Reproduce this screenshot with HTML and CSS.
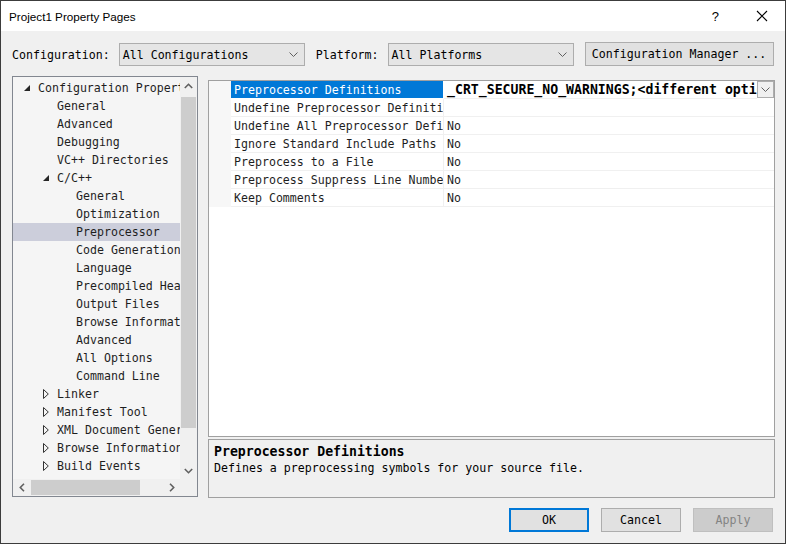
FILE: index.html
```html
<!DOCTYPE html>
<html>
<head>
<meta charset="utf-8">
<link rel="stylesheet" href="styles.css">
</head>
<body>
<div class="window">
  <div class="titlebar">
    <span class="title">Project1 Property Pages</span>
    <span class="help">?</span>
    <span class="close"><svg width="12" height="12" viewBox="0 0 12 12"><path d="M1 1L11 11M11 1L1 11" stroke="#000" stroke-width="1.1" fill="none"/></svg></span>
  </div>

  <div class="config-row">
    <span class="label">Configuration:</span>
    <div class="select sel-config"><span>All Configurations</span><svg class="chev" width="9" height="5" viewBox="0 0 9 5"><path d="M0.5 0.5L4.5 4.5L8.5 0.5" stroke="#606060" fill="none"/></svg></div>
    <span class="label lbl-platform">Platform:</span>
    <div class="select sel-platform"><span>All Platforms</span><svg class="chev" width="9" height="5" viewBox="0 0 9 5"><path d="M0.5 0.5L4.5 4.5L8.5 0.5" stroke="#606060" fill="none"/></svg></div>
    <div class="btn btn-cm">Configuration Manager ...</div>
  </div>

  <div class="content">
    <div class="tree">
      <div class="tree-body">
        <div class="tree-items">
          <div class="node l0"><svg class="exp" width="6" height="6" viewBox="0 0 6 6"><polygon points="6,0 6,6 0,6" fill="#262626"/></svg>Configuration Properties</div>
          <div class="node l1">General</div>
          <div class="node l1">Advanced</div>
          <div class="node l1">Debugging</div>
          <div class="node l1">VC++ Directories</div>
          <div class="node l1 has"><svg class="exp" width="6" height="6" viewBox="0 0 6 6"><polygon points="6,0 6,6 0,6" fill="#262626"/></svg>C/C++</div>
          <div class="node l2">General</div>
          <div class="node l2">Optimization</div>
          <div class="node l2 selected">Preprocessor</div>
          <div class="node l2">Code Generation</div>
          <div class="node l2">Language</div>
          <div class="node l2">Precompiled Headers</div>
          <div class="node l2">Output Files</div>
          <div class="node l2">Browse Information</div>
          <div class="node l2">Advanced</div>
          <div class="node l2">All Options</div>
          <div class="node l2">Command Line</div>
          <div class="node l1 has"><svg class="col" width="6" height="10" viewBox="0 0 6 10"><polygon points="0.5,0.5 5.3,5 0.5,9.5" fill="none" stroke="#333" stroke-width="1"/></svg>Linker</div>
          <div class="node l1 has"><svg class="col" width="6" height="10" viewBox="0 0 6 10"><polygon points="0.5,0.5 5.3,5 0.5,9.5" fill="none" stroke="#333" stroke-width="1"/></svg>Manifest Tool</div>
          <div class="node l1 has"><svg class="col" width="6" height="10" viewBox="0 0 6 10"><polygon points="0.5,0.5 5.3,5 0.5,9.5" fill="none" stroke="#333" stroke-width="1"/></svg>XML Document Generator</div>
          <div class="node l1 has"><svg class="col" width="6" height="10" viewBox="0 0 6 10"><polygon points="0.5,0.5 5.3,5 0.5,9.5" fill="none" stroke="#333" stroke-width="1"/></svg>Browse Information</div>
          <div class="node l1 has"><svg class="col" width="6" height="10" viewBox="0 0 6 10"><polygon points="0.5,0.5 5.3,5 0.5,9.5" fill="none" stroke="#333" stroke-width="1"/></svg>Build Events</div>
        </div>
        <div class="vscroll">
          <div class="sb-arrow"><svg width="9" height="6" viewBox="0 0 9 6"><path d="M0.8 5L4.5 1.3L8.2 5" stroke="#606060" stroke-width="1.6" fill="none"/></svg></div>
          <div class="vtrack"><div class="vthumb"></div></div>
          <div class="sb-arrow"><svg width="9" height="6" viewBox="0 0 9 6"><path d="M0.8 1L4.5 4.7L8.2 1" stroke="#606060" stroke-width="1.6" fill="none"/></svg></div>
        </div>
      </div>
      <div class="hscroll">
        <div class="sb-arrow-h"><svg width="6" height="9" viewBox="0 0 6 9"><path d="M5 0.8L1.3 4.5L5 8.2" stroke="#606060" stroke-width="1.6" fill="none"/></svg></div>
        <div class="htrack"><div class="hthumb"></div></div>
        <div class="sb-arrow-h"><svg width="6" height="9" viewBox="0 0 6 9"><path d="M1 0.8L4.7 4.5L1 8.2" stroke="#606060" stroke-width="1.6" fill="none"/></svg></div>
        <div class="corner"></div>
      </div>
    </div>

    <div class="right">
      <div class="grid">
        <div class="row sel">
          <div class="gutter"></div>
          <div class="name">Preprocessor Definitions</div>
          <div class="value bold">_CRT_SECURE_NO_WARNINGS;&lt;different options&gt;</div>
          <div class="drop"><svg width="9" height="5" viewBox="0 0 9 5"><path d="M0.5 0.5L4.5 4.5L8.5 0.5" stroke="#606060" fill="none"/></svg></div>
        </div>
        <div class="row"><div class="gutter"></div><div class="name">Undefine Preprocessor Definitions</div><div class="value"></div></div>
        <div class="row"><div class="gutter"></div><div class="name">Undefine All Preprocessor Definitions</div><div class="value">No</div></div>
        <div class="row"><div class="gutter"></div><div class="name">Ignore Standard Include Paths</div><div class="value">No</div></div>
        <div class="row"><div class="gutter"></div><div class="name">Preprocess to a File</div><div class="value">No</div></div>
        <div class="row"><div class="gutter"></div><div class="name">Preprocess Suppress Line Numbers</div><div class="value">No</div></div>
        <div class="row"><div class="gutter"></div><div class="name">Keep Comments</div><div class="value">No</div></div>
      </div>
      <div class="desc">
        <div class="desc-title">Preprocessor Definitions</div>
        <div class="desc-text">Defines a preprocessing symbols for your source file.</div>
      </div>
    </div>
  </div>

  <div class="buttons">
    <div class="btn dlg default">OK</div>
    <div class="btn dlg">Cancel</div>
    <div class="btn dlg disabled">Apply</div>
  </div>
</div>
</body>
</html>
```

FILE: styles.css
```css
* { box-sizing: border-box; }
html, body { margin: 0; padding: 0; }
body { background: #f0f0f0; }

.window {
  width: 786px;
  height: 544px;
  border: 1px solid #3c3c3c;
  background: #f0f0f0;
  font-family: "DejaVu Sans Mono", "Liberation Mono", monospace;
  font-size: 11.6px;
  color: #000;
  overflow: hidden;
}

.titlebar {
  height: 30px;
  background: #fff;
  display: flex;
  align-items: center;
  padding-left: 8px;
  font-family: "Liberation Sans", "Noto Sans", sans-serif;
  font-size: 11.7px;
}
.title { flex: 1; }
.help { font-size: 13px; margin-right: 37px; }
.close { width: 12px; height: 12px; margin-right: 17px; display: flex; }

.config-row {
  display: flex;
  align-items: center;
  height: 24px;
  margin-top: 11px;
  padding-left: 11px;
  padding-top: 1px;
}
.label { margin-right: 9px; }
.lbl-platform { margin-left: 11px; }
.select {
  width: 186px;
  height: 23px;
  border: 1px solid #adadad;
  background: #e5e5e5;
  display: flex;
  align-items: center;
  justify-content: space-between;
  padding: 0 6px 0 3px;
}
.btn {
  border: 1px solid #adadad;
  background: #e1e1e1;
  display: flex;
  align-items: center;
  justify-content: center;
}
.btn-cm { width: 189px; height: 24px; margin-left: 11px; margin-top: -1px; }

.content {
  display: flex;
  margin-top: 10px;
  padding-left: 11px;
}

.tree {
  width: 186px;
  height: 421px;
  border: 1px solid #828790;
  background: #f5f5f5;
  display: flex;
  flex-direction: column;
}
.tree-body { flex: 1; display: flex; min-height: 0; }
.tree-items {
  flex: 1;
  overflow: hidden;
  padding-top: 2px;
  color: #1e1e1e;
}
.node {
  height: 18px;
  line-height: 18px;
  white-space: nowrap;
  position: relative;
  padding-left: 25px;
}
.node.l1 { padding-left: 44px; }
.node.l2 { padding-left: 63px; }
.node.selected { background: #cccedb; }
.node .exp { position: absolute; top: 6px; left: 11px; }
.node.l1 .exp { left: 30px; }
.node .col { position: absolute; top: 4px; left: 30px; }

.vscroll {
  width: 17px;
  display: flex;
  flex-direction: column;
  background: #f0f0f0;
}
.sb-arrow { height: 17px; display: flex; align-items: center; justify-content: center; }
.vtrack { flex: 1; padding: 3px 1px 34px 1px; }
.vthumb { background: #cdcdcd; height: 100%; }

.hscroll { height: 17px; display: flex; background: #f0f0f0; }
.sb-arrow-h { width: 17px; display: flex; align-items: center; justify-content: center; }
.htrack { flex: 1; padding: 1px 0; }
.hthumb { width: 109px; height: 100%; background: #cdcdcd; margin-left: 1px; }
.corner { width: 17px; background: #f0f0f0; }

.right {
  width: 567px;
  margin-left: 10px;
  display: flex;
  flex-direction: column;
}
.grid {
  margin-top: 4px;
  height: 357px;
  border: 1px solid #a0a0a0;
  background: #fff;
}
.row {
  display: flex;
  height: 18px;
  line-height: 19px;
  white-space: nowrap;
}
.gutter { width: 22px; background: #f7f7f7; }
.name {
  width: 213px;
  padding-left: 3px;
  overflow: hidden;
  border-right: 1px solid #f0f0f0;
  border-bottom: 1px solid #f0f0f0;
  color: #1e1e1e;
}
.row.sel .name { background: #0078d7; color: #fff; border-right-color: #fff; border-bottom-color: #fff; }
.value {
  flex: 1;
  min-width: 0;
  padding-left: 3px;
  overflow: hidden;
  border-bottom: 1px solid #f0f0f0;
  color: #1e1e1e;
}
.value.bold { font-weight: bold; color: #000; font-size: 13.2px; line-height: 18px; }
.drop {
  width: 17px;
  height: 17px;
  border: 1px solid #adadad;
  background: #f0f0f0;
  display: flex;
  align-items: center;
  justify-content: center;
}

.desc {
  margin-top: 2px;
  height: 59px;
  border: 1px solid #a0a0a0;
  background: #f0f0f0;
  padding: 3px 5px;
  line-height: 17px;
}
.desc-title { font-weight: bold; font-size: 13.2px; }

.buttons {
  display: flex;
  justify-content: flex-end;
  gap: 12px;
  margin-top: 10px;
  padding-right: 12px;
}
.dlg { width: 80px; height: 24px; }
.dlg.default { border: 2px solid #0078d7; }
.dlg.disabled { background: #cccccc; border-color: #bfbfbf; color: #838383; }
```
